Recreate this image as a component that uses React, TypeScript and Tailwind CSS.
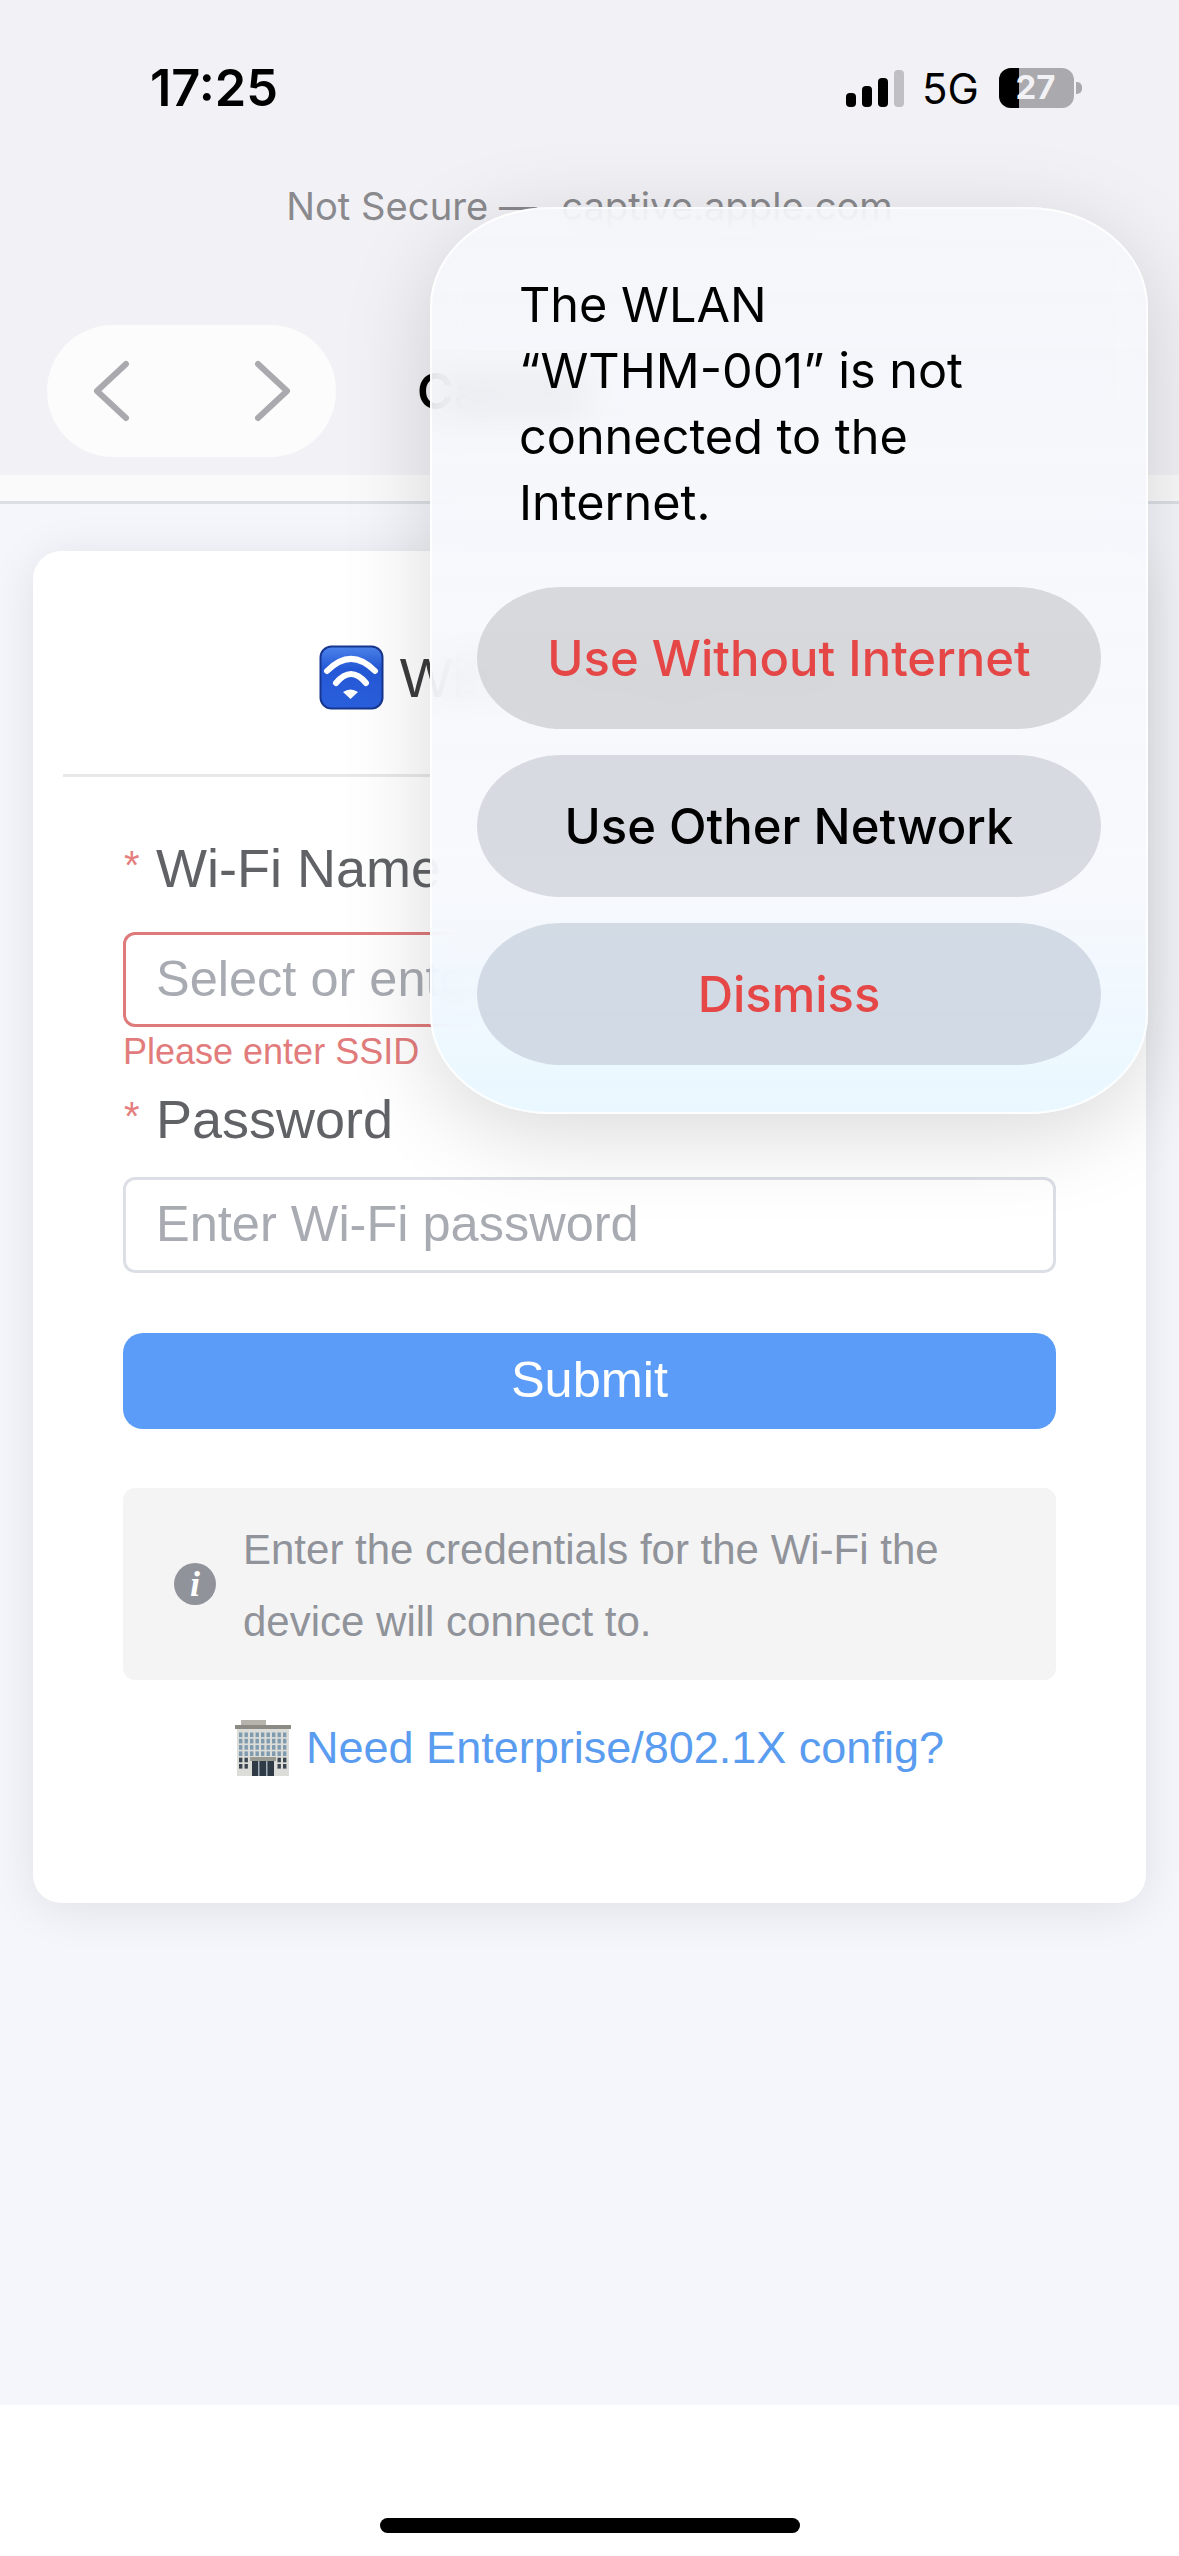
import React from "react";

const Chevron = ({ right }: { right?: boolean }) => (
  <svg width="38" height="62" viewBox="0 0 38 62" fill="none" className="block">
    <path
      d={right ? "M4 4 L33 31 L4 58" : "M34 4 L5 31 L34 58"}
      stroke="#a9a9ae"
      strokeWidth="6"
      strokeLinecap="round"
      strokeLinejoin="round"
    />
  </svg>
);

const WifiEmoji = () => (
  <svg width="65" height="65" viewBox="0 0 65 65" className="shrink-0 block">
    <defs>
      <linearGradient id="wf" x1="0" y1="0" x2="0" y2="1">
        <stop offset="0" stopColor="#4a82ea" />
        <stop offset="0.35" stopColor="#2558d6" />
        <stop offset="1" stopColor="#2a5fdc" />
      </linearGradient>
    </defs>
    <rect x="0.5" y="0.5" width="64" height="64" rx="12" fill="#16368f" />
    <rect x="2.5" y="2.5" width="60" height="60" rx="10" fill="url(#wf)" />
    <path d="M8 26 Q32 2 56 26" stroke="#fff" strokeWidth="6" fill="none" strokeLinecap="round" />
    <path d="M17 38 Q32 20 47 38" stroke="#fff" strokeWidth="6" fill="none" strokeLinecap="round" />
    <path d="M24 47 Q31.5 42 39 47 L31.5 54 Z" fill="#fff" />
  </svg>
);

const BuildingEmoji = () => {
  const cells: React.ReactElement[] = [];
  for (let r = 0; r < 6; r++) {
    for (let c = 0; c < 9; c++) {
      if (r >= 4 && c >= 2 && c <= 6) continue;
      cells.push(
        <rect
          key={`${r}-${c}`}
          x={4 + c * 5.5}
          y={12.5 + r * 6.3}
          width="3.4"
          height="4.6"
          fill={r >= 4 ? "#3d4650" : "#7f9bb0"}
        />
      );
    }
  }
  return (
    <svg width="56" height="56" viewBox="0 0 56 56" className="shrink-0 block">
      <rect x="6" y="0" width="25" height="6" fill="#b5b3ac" />
      <rect x="0" y="5" width="56" height="4" fill="#8b8a84" />
      <rect x="2" y="9" width="52" height="47" fill="#dcdcd8" />
      {cells}
      <rect x="15" y="37" width="26" height="4" fill="#9a9a94" />
      <rect x="17" y="41" width="22" height="15" fill="#2f3a44" />
      <rect x="23" y="41" width="1.5" height="15" fill="#9fb0bc" />
      <rect x="31" y="41" width="1.5" height="15" fill="#9fb0bc" />
    </svg>
  );
};

const Label = ({ text, className }: { text: string; className: string }) => (
  <div className={`flex items-center h-[78px] text-[54px] text-[#606266] ${className}`}>
    <span className="text-[#e57f7f] text-[40px] w-[33px] pl-[1px] mt-[-6px]">*</span>
    <span>{text}</span>
  </div>
);

export default function App() {
  return (
    <div className="relative w-[1179px] h-[2556px] overflow-hidden flex flex-col bg-white font-['Liberation_Sans',Arial,sans-serif]">
      {/* browser chrome */}
      <header className="bg-[#f2f2f6] font-['Inter',sans-serif] shrink-0">
        <div className="h-[176px] flex items-center justify-between pl-[150px] pr-[97px]">
          <span className="text-[50.5px] font-semibold text-black">17:25</span>
          <div className="flex items-center">
            <div className="flex items-end gap-[6px] h-[37px]">
              <i className="block w-[10px] h-[14px] rounded-[4px] bg-black" />
              <i className="block w-[10px] h-[21px] rounded-[4px] bg-black" />
              <i className="block w-[10px] h-[29px] rounded-[4px] bg-black" />
              <i className="block w-[10px] h-[37px] rounded-[4px] bg-[#bfbfc4]" />
            </div>
            <span className="ml-[18px] text-[42px] text-black w-[77px]">5G</span>
            <div className="relative w-[75px] h-[40px] rounded-[12px] bg-[#a9a9ae] overflow-hidden">
              <div className="absolute left-0 top-0 bottom-0 w-[20px] bg-black" />
              <span className="absolute inset-0 flex items-center justify-center pr-[2px] text-[33px] font-bold text-[#f2f2f6]">27</span>
            </div>
            <div className="ml-[2px] w-[6px] h-[12px] rounded-r-[5px] bg-[#a9a9ae]" />
          </div>
        </div>
        <div className="h-[62px] flex items-start justify-center text-[38.2px] leading-[60px] text-[#8a8a8e]">
          <span>Not Secure —</span>
          <span className="ml-[24px]">captive.apple.com</span>
        </div>
        <div className="flex items-center pt-[87px] pb-[18px] pl-[47px]">
          <div className="w-[289px] h-[132px] rounded-[66px] bg-[#fcfcfd] flex items-center justify-between pl-[45px] pr-[44px]">
            <Chevron />
            <Chevron right />
          </div>
          <span className="ml-[81px] text-[50px] font-semibold text-black">Cancel</span>
        </div>
      </header>
      <div className="h-[29px] shrink-0 bg-[#fafafa] border-b-[3px] border-[#dcdfe4]" />

      {/* page */}
      <main className="flex-1 bg-[#f5f6fb] px-[33px] pt-[47px]">
        <section className="h-[1352px] rounded-[28px] bg-white px-[30px] shadow-[0_6px_48px_rgba(0,0,0,0.09)]">
          <div className="h-[226px] pt-[30px] flex items-center justify-center gap-[16px] border-b-[3px] border-[#e8e8ea] text-[56px] text-[#3c3c3e]">
            <WifiEmoji />
            <span>WiFi Configuration</span>
          </div>
          <div className="px-[60px] pt-[52px]">
            <Label text="Wi-Fi Name" className="mb-[25px]" />
            <input
              placeholder="Select or enter Wi-Fi name"
              className="block w-full h-[95px] rounded-[12px] border-[3px] border-[#df7a7a] bg-white px-[30px] pb-[3px] text-[50.5px] outline-none placeholder:text-[#a8abb2]"
            />
            <p className="mt-[5px] h-[40px] leading-[40px] text-[36px] text-[#e27c7c]">Please enter SSID</p>
            <Label text="Password" className="mt-[8px] mb-[19px]" />
            <input
              placeholder="Enter Wi-Fi password"
              className="block w-full h-[96px] rounded-[12px] border-[3px] border-[#dcdfe6] bg-white px-[30px] pb-[3px] text-[50.5px] outline-none placeholder:text-[#a8abb2]"
            />
            <button className="block w-full h-[96px] mt-[60px] pb-[3px] rounded-[20px] bg-[#5a9cf8] text-[50.5px] text-white">Submit</button>
            <div className="mt-[59px] h-[192px] rounded-[12px] bg-[#f4f4f5] flex items-center pl-[51px] gap-[27px]">
              <span className="w-[42px] h-[42px] shrink-0 rounded-full bg-[#909399] flex items-center justify-center text-white text-[36px] italic font-bold font-['Liberation_Serif',serif]">i</span>
              <p className="pt-[3px] text-[42px] leading-[72px] text-[#909399] w-[720px]">Enter the credentials for the Wi-Fi the device will connect to.</p>
            </div>
            <div className="mt-[38px] h-[60px] flex items-center justify-center gap-[15px] text-[45px] text-[#5a9cf0]">
              <BuildingEmoji />
              <span>Need Enterprise/802.1X config?</span>
            </div>
          </div>
        </section>
      </main>

      {/* home indicator */}
      <footer className="h-[151px] shrink-0 bg-white flex justify-center pt-[113px]">
        <div className="w-[420px] h-[15px] rounded-full bg-black" />
      </footer>

      {/* WLAN alert */}
      <div className="absolute left-[430px] top-[207px] w-[718px] h-[907px] rounded-[120px/100px] border-[2px] border-white/80 bg-linear-to-b from-[#f6f7fbd8] via-[#f6f8fde4] via-75% to-[#e8f7ffee] backdrop-blur-[20px] shadow-[0_20px_90px_rgba(0,0,0,0.15)] font-['Inter',sans-serif] px-[45px] pt-[63px]">
        <p className="pl-[42px] text-[48.6px] leading-[66px] text-black">
          The WLAN
          <br />
          “WTHM-001” is not
          <br />
          connected to the
          <br />
          Internet.
        </p>
        <div className="mt-[51px] flex flex-col gap-[26px]">
          <button className="h-[142px] pt-[2px] rounded-[85px/71px] bg-[#cfd0d3c8] text-[49px] font-medium text-[#e54747]">Use Without Internet</button>
          <button className="h-[142px] pt-[2px] rounded-[85px/71px] bg-[#cfd2d9c8] text-[49px] font-medium text-black">Use Other Network</button>
          <button className="h-[142px] pt-[2px] rounded-[85px/71px] bg-[#cad2dec8] text-[49px] font-medium text-[#e54747]">Dismiss</button>
        </div>
      </div>
    </div>
  );
}
